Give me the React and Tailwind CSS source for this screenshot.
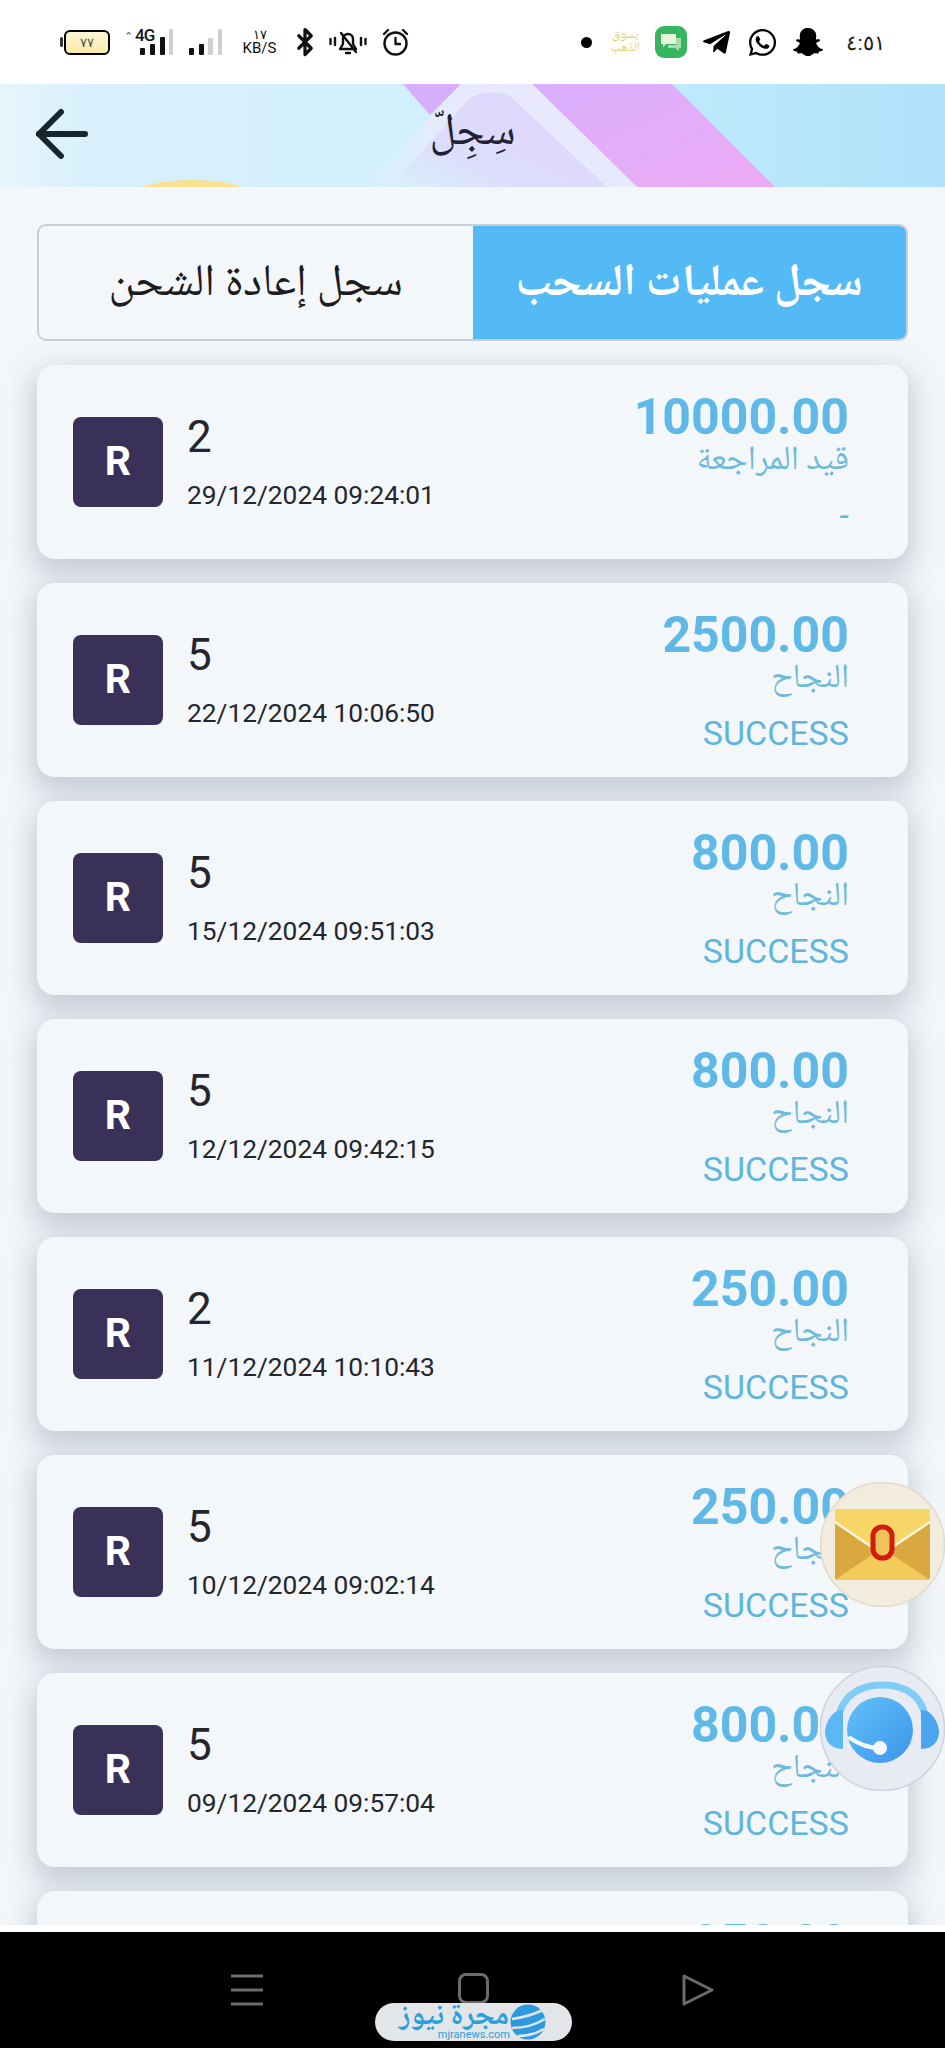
import React from 'react';
import { Bluetooth } from 'lucide-react';
import { FaTelegramPlane, FaWhatsapp, FaSnapchatGhost } from 'react-icons/fa';

const records = [
  { count: '2', date: '29/12/2024 09:24:01', amount: '10000.00', status: 'قيد المراجعة', note: '-' },
  { count: '5', date: '22/12/2024 10:06:50', amount: '2500.00', status: 'النجاح', note: 'SUCCESS' },
  { count: '5', date: '15/12/2024 09:51:03', amount: '800.00', status: 'النجاح', note: 'SUCCESS' },
  { count: '5', date: '12/12/2024 09:42:15', amount: '800.00', status: 'النجاح', note: 'SUCCESS' },
  { count: '2', date: '11/12/2024 10:10:43', amount: '250.00', status: 'النجاح', note: 'SUCCESS' },
  { count: '5', date: '10/12/2024 09:02:14', amount: '250.00', status: 'النجاح', note: 'SUCCESS' },
  { count: '5', date: '09/12/2024 09:57:04', amount: '800.00', status: 'النجاح', note: 'SUCCESS' },
  { count: '5', date: '08/12/2024 09:30:11', amount: '250.00', status: 'النجاح', note: 'SUCCESS' },
];

const arabic = "font-['Noto_Naskh_Arabic','Noto_Sans_Arabic','DejaVu_Sans',sans-serif]";

function Battery() {
  return (
    <div className="flex items-center gap-[1px] w-[50px]">
      <div className="w-[3px] h-[10px] bg-[#333] rounded-sm" />
      <div className="w-[46px] h-[25px] rounded-[6px] border-[2px] border-black bg-gradient-to-b from-[#fdf6d6] to-[#fbeaa8] flex items-center justify-center">
        <span className="font-['Liberation_Sans',sans-serif] text-[13px] leading-none text-[#555]">٧٧</span>
      </div>
    </div>
  );
}

function StatusBar() {
  return (
    <div className="h-[84px] bg-white flex items-center justify-between pl-[60px] pr-[60px] shrink-0">
      <div className="flex items-center">
        <Battery />
        <div className="relative ml-[13px] w-[50px] h-[28px]">
          <span className="absolute left-[12px] -top-[1px] font-['Roboto',sans-serif] font-medium text-[17px] leading-none text-[#111] tracking-tighter">4G</span>
          <span className="absolute left-[1px] top-[2px] text-[11px] leading-none text-[#555]">⌃</span>
          <svg className="absolute left-0 top-0" width="50" height="28" viewBox="0 0 50 28">
            <rect x="17" y="20" width="5" height="7" rx="1" fill="#111" />
            <rect x="27" y="16" width="5" height="11" rx="1" fill="#111" />
            <rect x="37" y="9" width="5" height="18" rx="1" fill="#111" />
            <rect x="46" y="1" width="4" height="26" rx="1" fill="#cfcfcf" />
          </svg>
        </div>
        <svg className="ml-[16px]" width="34" height="27" viewBox="0 0 34 27">
          <rect x="0" y="19" width="5" height="7" rx="1" fill="#111" />
          <rect x="10" y="15" width="5" height="11" rx="1" fill="#111" />
          <rect x="19" y="9" width="5" height="17" rx="1" fill="#cfcfcf" />
          <rect x="29" y="0" width="4" height="26" rx="1" fill="#cfcfcf" />
        </svg>
        <div className="ml-[18px] w-[37px] flex flex-col items-center font-['Roboto',sans-serif] text-[#111] leading-none">
          <span className="text-[13px] leading-[13px]">١٧</span>
          <span className="text-[15px] leading-[15px]">KB/S</span>
        </div>
        <Bluetooth className="ml-[12px]" size={30} strokeWidth={2.6} color="#111" />
        <svg className="ml-[9px]" width="38" height="28" viewBox="0 0 38 28" fill="none" stroke="#111" strokeWidth="2.4" strokeLinecap="round" strokeLinejoin="round">
          <path d="M11 21h16l-3-5v-5a5 5 0 0 0-10 0v5z" />
          <path d="M17 25h4" />
          <path d="M12 5l15 19" />
          <path d="M1.500 11v5M6 10v7M32 10v7M36.500 11v5" />
        </svg>
        <svg className="ml-[15px]" width="27" height="28" viewBox="0 0 27 28" fill="none" stroke="#111" strokeWidth="2.4" strokeLinecap="round" strokeLinejoin="round">
          <circle cx="13.500" cy="15.500" r="11" />
          <path d="M13.500 10v6h4.500" />
          <path d="M2 6l4-4M25 6l-4-4" />
        </svg>
      </div>
      <div className="flex items-center">
        <div className="w-[11px] h-[11px] rounded-full bg-black" />
        <div className={`${arabic} ml-[17px] w-[32px] text-[13px] leading-[13px] text-[#e3cf6e] text-center whitespace-nowrap`}>
          بسوق<br />الذهب
        </div>
        <div className="ml-[14px] w-[32px] h-[32px] rounded-[9px] bg-[#36b55f] flex items-center justify-center">
          <svg width="22" height="20" viewBox="0 0 22 20">
            <path d="M16 6h5v10h-2v3l-4-3H8v-3h8z" fill="#a9dcb0" />
            <path d="M1 2h15v10H6l-3 3v-3H1z" fill="#e8f3d8" />
          </svg>
        </div>
        <FaTelegramPlane className="ml-[14px]" size={31} color="#000" />
        <FaWhatsapp className="ml-[15px]" size={31} color="#000" />
        <FaSnapchatGhost className="ml-[15px]" size={30} color="#000" />
        <span className="ml-[23px] font-['Liberation_Sans',sans-serif] text-[21px] leading-none text-[#222]">٤:٥١</span>
      </div>
    </div>
  );
}

function Header() {
  return (
    <div className="relative h-[103px] shrink-0 flex items-center justify-center overflow-hidden bg-[#d3effc]">
      <svg className="absolute inset-0" width="945" height="103" viewBox="0 0 945 103">
        <defs>
          <linearGradient id="base" x1="0" y1="0" x2="1" y2="0">
            <stop offset="0" stopColor="#e6f5fb" />
            <stop offset="0.1" stopColor="#d8f0fb" />
            <stop offset="0.45" stopColor="#d2f0fc" />
            <stop offset="0.72" stopColor="#bfe9fc" />
            <stop offset="1" stopColor="#afe1f9" />
          </linearGradient>
          <linearGradient id="band" x1="0" y1="0" x2="1" y2="1">
            <stop offset="0" stopColor="#d9aefb" />
            <stop offset="1" stopColor="#edabf6" />
          </linearGradient>
          <linearGradient id="lav" x1="0" y1="1" x2="0.800" y2="0.300">
            <stop offset="0" stopColor="#d8f0fb" />
            <stop offset="0.45" stopColor="#ddddfb" />
            <stop offset="1" stopColor="#e0d6fc" />
          </linearGradient>
          <linearGradient id="rim" x1="0" y1="1" x2="1" y2="0.400">
            <stop offset="0" stopColor="#d6f0fb" />
            <stop offset="0.45" stopColor="#e4ecfd" />
            <stop offset="1" stopColor="#ebe6fd" />
          </linearGradient>
        </defs>
        <rect width="945" height="103" fill="url(#base)" />
        <path d="M403 0 L461 0 L430 31z" fill="#d6aef9" />
        <path d="M532 0 L672 0 L775 103 L637 103z" fill="url(#band)" />
        <path d="M367 103 L461 0 L532 0 L637 103z" fill="url(#rim)" />
        <path d="M390 103 L470 14 Q490 4 510 12 L607 103z" fill="url(#lav)" />
        <ellipse cx="192" cy="112" rx="60" ry="16" fill="#fae08f" />
      </svg>
      <svg className="absolute left-[36px] top-[24px]" width="52" height="52" viewBox="0 0 52 52" fill="none" stroke="#17262c" strokeWidth="6" strokeLinecap="round" strokeLinejoin="round">
        <path d="M25 4 L3 26 L25 48" />
        <path d="M3 26 H49" />
      </svg>
      <span className={`${arabic} relative -mt-[3px] text-[45px] leading-none text-[#1e2233]`}>سِجِلّ</span>
    </div>
  );
}

function Tabs() {
  return (
    <div className="flex h-[117px] rounded-[9px] border-[2px] border-[#c9ced6] overflow-hidden">
      <div className={`${arabic} w-1/2 flex items-center justify-center pt-[6px] text-[45px] text-[#1c1c1f]`}>سجل إعادة الشحن</div>
      <div className={`${arabic} w-1/2 flex items-center justify-center pt-[6px] text-[45px] font-bold text-white bg-[#53baf5]`}>سجل عمليات السحب</div>
    </div>
  );
}

function RecordCard({ item }) {
  return (
    <div className="h-[194px] shrink-0 rounded-[18px] bg-[#f3f7fa] shadow-[0_10px_26px_6px_rgba(160,167,185,0.5)] flex items-center justify-between pl-[36px] pr-[59px]">
      <div className="flex items-center gap-[24px]">
        <div className="w-[90px] h-[90px] rounded-[8px] bg-[#3a3159] flex items-center justify-center font-['Roboto',sans-serif] font-bold text-[41px] text-white">R</div>
        <div className="font-['Roboto',sans-serif] text-[#23262e]">
          <div className="-mt-[2px] text-[44px] leading-[50px]">{item.count}</div>
          <div className="mt-[18px] text-[26.300px] leading-[30px]">{item.date}</div>
        </div>
      </div>
      <div className="flex flex-col items-end">
        <div className="-mt-[2px] font-['Roboto',sans-serif] font-bold text-[50px] leading-[56px] text-[#5fb9e6]">{item.amount}</div>
        <div className={`${arabic} -mt-[2px] text-[34px] leading-[38px] text-[#6fbad9]`}>{item.status}</div>
        <div className="mt-[15px] font-['Roboto',sans-serif] text-[34px] leading-[38px] text-[#5fb6dc]">{item.note}</div>
      </div>
    </div>
  );
}

function EnvelopeButton() {
  return (
    <svg className="absolute right-0 top-[1482px]" width="125" height="125" viewBox="0 0 125 125">
      <circle cx="62.500" cy="62.500" r="62" fill="#f1ecdd" stroke="#e3d9c6" strokeWidth="1.500" />
      <rect x="15" y="27" width="95" height="71" rx="3" fill="#f5d265" />
      <path d="M15 40 L62 72 L62 98 H18 Q15 98 15 95z" fill="#d9a93f" />
      <path d="M110 40 L62 72 L62 98 H107 Q110 98 110 95z" fill="#d9a93f" />
      <path d="M15 98 L62 66 L110 98z" fill="#f2cb5c" />
      <path d="M15 27 H110 V40 L62 72 L15 40z" fill="#f7d566" />
      <path d="M15 40 L62 72 L110 40" fill="none" stroke="#fff6d8" strokeWidth="2.500" />
      <rect x="53" y="45" width="19" height="31" rx="9" fill="#f0c25a" stroke="#d21c0d" strokeWidth="5" />
    </svg>
  );
}

function HeadsetButton() {
  return (
    <svg className="absolute right-0 top-[1666px]" width="125" height="125" viewBox="0 0 125 125">
      <defs>
        <linearGradient id="face" x1="0" y1="0" x2="1" y2="1">
          <stop offset="0" stopColor="#62c1f8" />
          <stop offset="1" stopColor="#3d96ea" />
        </linearGradient>
      </defs>
      <circle cx="62.500" cy="62.500" r="62" fill="#e9ebf3" stroke="#cfd2e0" strokeWidth="1.500" />
      <circle cx="60" cy="64" r="33" fill="url(#face)" />
      <path d="M18 56 C20 30 40 19 62 19 C86 19 104 30 106 56" fill="none" stroke="#7fcdf6" strokeWidth="7" />
      <path d="M23 44 C10 44 5 60 5 66 C5 74 10 83 23 83z" fill="#5bb8f3" />
      <path d="M101 44 C114 44 119 60 119 66 C119 74 114 83 101 83z" fill="#4aa6ee" />
      <path d="M30 72 Q44 82 60 82" fill="none" stroke="#f4f8fd" strokeWidth="4" strokeLinecap="round" />
      <circle cx="60" cy="82" r="7" fill="#f4f8fd" />
    </svg>
  );
}

function NavBar() {
  return (
    <div className="relative h-[116px] shrink-0 bg-black">
      <div className="flex items-start justify-between pt-[41px] pl-[230px] pr-[231px]">
        <svg width="34" height="34" viewBox="0 0 34 34" stroke="#6b6b6b" strokeWidth="3">
          <path d="M1 3h32M1 17h32M1 31h32" />
        </svg>
        <div className="w-[31px] h-[31px] rounded-[8px] border-[3px] border-[#6b6b6b]" />
        <svg width="32" height="34" viewBox="0 0 32 34" fill="none" stroke="#6b6b6b" strokeWidth="3" strokeLinejoin="round">
          <path d="M2 3 L30 17 L2 31z" />
        </svg>
      </div>
      <div className="absolute left-[375px] top-[71px] w-[197px] h-[38px] rounded-full bg-[#e2e6e8] flex items-center pl-[23px] overflow-hidden">
        <div className="w-[112px] flex flex-col items-center">
          <span className={`${arabic} font-bold text-[30px] leading-[25px] text-[#2a9fe0] whitespace-nowrap`}>مجرة نيوز</span>
          <span className="self-end font-['Roboto',sans-serif] text-[11px] leading-[10px] text-[#2a9fe0]">mjranews.com</span>
        </div>
        <svg className="ml-0" width="36" height="36" viewBox="0 0 36 36">
          <circle cx="18" cy="18" r="17.500" fill="#2d9adf" />
          <path d="M2 15 Q18 13 33 6M2 24 Q20 24 35 15M8 32 Q22 32 34 25" fill="none" stroke="#e2e6e8" strokeWidth="2.500" />
        </svg>
      </div>
    </div>
  );
}

export default function App() {
  return (
    <div className="relative w-[945px] h-[2048px] flex flex-col overflow-hidden bg-[#f3f7fa]">
      <StatusBar />
      <Header />
      <div className="relative flex-1 overflow-hidden">
        <div className="flex flex-col gap-[24px] px-[37px] pt-[37px]">
          <Tabs />
          {records.map((item, idx) => (
            <RecordCard key={idx} item={item} />
          ))}
        </div>
        <div className="absolute left-0 right-0 bottom-0 h-[7px] bg-white" />
      </div>
      <NavBar />
      <EnvelopeButton />
      <HeadsetButton />
    </div>
  );
}
